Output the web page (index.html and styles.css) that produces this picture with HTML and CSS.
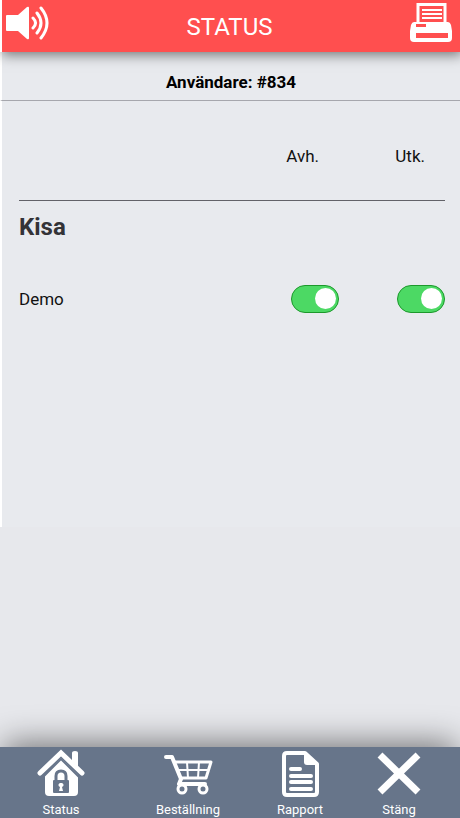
FILE: index.html
```html
<!DOCTYPE html>
<html lang="sv">
<head>
<meta charset="utf-8">
<meta name="viewport" content="width=device-width, initial-scale=1">
<title>Status</title>
<link rel="stylesheet" href="styles.css">
</head>
<body>
<div class="page">
  <header class="topbar">
    <button class="icon-button" type="button" aria-label="Ljud">
      <svg width="44" height="36" viewBox="0 0 44 36" fill="none" stroke="#fff" stroke-width="3" stroke-linecap="round">
        <path d="M1 10h11L21 2q2-1 2 1v30q0 2-2 1L12 26H1q-1 0-1-1V11q0-1 1-1z" fill="#fff" stroke="none"/>
        <path d="M27 13q5 5 0 10M31 8q8 10 0 20M35 3q12 15 0 30"/>
      </svg>
    </button>
    <h1 class="title">STATUS</h1>
    <button class="icon-button" type="button" aria-label="Skriv ut">
      <svg width="44" height="42" viewBox="0 0 44 42" fill="none" stroke="#fff">
        <path d="M9 21V2.500h27V21" stroke-width="3"/>
        <path d="M13 8h20M13 12h20M13 16h20" stroke-width="2"/>
        <path fill-rule="evenodd" d="M5 20h34q2 0 3 3l1 6v7q0 4-4 4H5q-4 0-4-4v-7l1-6q1-3 3-3zM7 22v3h10v-3zM7 31v5h32v-5z" fill="#fff" stroke="none"/>
      </svg>
    </button>
  </header>
  <main class="content">
    <p class="user">Användare: #834</p>
    <div class="panel">
      <table class="status-table">
        <thead>
          <tr><td></td><th class="option" scope="col">Avh.</th><th class="option" scope="col">Utk.</th></tr>
        </thead>
        <tbody>
          <tr><th class="group" scope="rowgroup" colspan="3">Kisa</th></tr>
          <tr>
            <th class="name" scope="row">Demo</th>
            <td class="option"><input class="switch" type="checkbox" role="switch" aria-label="Demo Avh." checked></td>
            <td class="option"><input class="switch" type="checkbox" role="switch" aria-label="Demo Utk." checked></td>
          </tr>
        </tbody>
      </table>
    </div>
  </main>
  <nav class="tabbar">
    <a class="tab" href="#status">
      <svg width="50" height="50" viewBox="0 0 50 50">
        <path d="M36 4q0-2 3-2t3 2v14l-6-6z" fill="#fff"/>
        <path d="M25 9L42 26v17q0 4-4 4H13q-4 0-4-4V26z" fill="#fff"/>
        <path d="M4 24L25 4l21 20" fill="none" stroke="#fff" stroke-width="5" stroke-linecap="round"/>
        <path d="M7 28L25 10l18 18" fill="none" stroke="#67758a" stroke-width="2"/>
        <path d="M20 32v-5q0-5 5-5t5 5v5" fill="none" stroke="#67758a" stroke-width="3"/>
        <rect x="17" y="31" width="16" height="13" rx="1" fill="#67758a"/>
        <path d="M25 34a2 2 0 0 1 1 4l1 4h-4l1-4a2 2 0 0 1 1-4z" fill="#fff"/>
      </svg>
      <span>Status</span>
    </a>
    <a class="tab" href="#bestallning">
      <svg width="50" height="50" viewBox="0 0 50 50" fill="none" stroke="#fff" stroke-linecap="round" stroke-linejoin="round">
        <path d="M3 8h6l9 22-2 5h26" stroke-width="4"/>
        <path d="M12 13h36l-5 16H18" stroke-width="3"/>
        <path d="M15 21h30M24 13l1 16M36 13l-1 16" stroke-width="2"/>
        <circle cx="19" cy="40" r="4" stroke-width="3" fill="#67758a"/>
        <circle cx="40" cy="40" r="4" stroke-width="3" fill="#67758a"/>
      </svg>
      <span>Beställning</span>
    </a>
    <a class="tab" href="#rapport">
      <svg width="50" height="50" viewBox="0 0 50 50" fill="none" stroke="#fff" stroke-linecap="round">
        <path d="M30 4H12q-3 0-3 3v36q0 3 3 3h27q3 0 3-3V15z" stroke-width="4" stroke-linejoin="round"/>
        <path d="M29 3v10q0 3 3 3h11z" fill="#fff" stroke="none"/>
        <path d="M16 20h9M16 27h20M16 33h20M16 40h20" stroke-width="4"/>
      </svg>
      <span>Rapport</span>
    </a>
    <a class="tab" href="#stang">
      <svg width="50" height="50" viewBox="0 0 50 50">
        <path d="M6 6l38 37M44 6L6 43" fill="none" stroke="#fff" stroke-width="7"/>
      </svg>
      <span>Stäng</span>
    </a>
  </nav>
</div>
</body>
</html>
```
FILE: styles.css
```css
* {
  box-sizing: border-box;
}

body {
  margin: 0;
  background: #e7e8ec;
  color: #111;
  font: 17px/20px Roboto, sans-serif;
}

.page {
  display: flex;
  flex-direction: column;
  min-height: 100vh;
}

.topbar {
  display: grid;
  grid-template-columns: 44px 1fr 44px;
  align-items: start;
  padding: 2px 7px 0 4px;
  height: 52px;
  border-left: 2px solid #fff;
  background: #ff4f4f;
  background-clip: padding-box;
  box-shadow: 2px 3px 12px rgba(0, 0, 0, 0.5);
  position: relative;
}

.icon-button {
  padding: 0;
  border: 0;
  background: none;
  line-height: 0;
}

.icon-button:first-child {
  padding-top: 3px;
}

.title {
  margin: 0;
  color: #fff;
  font-size: 24px;
  font-weight: 400;
  line-height: 50px;
  text-align: center;
}

.content {
  flex: 1;
}

.user {
  margin: 0;
  padding: 20px 0 8px;
  border-left: 2px solid #fff;
  border-bottom: 1px solid #a6a7ad;
  background: #e8eaee;
  font-weight: 700;
  color: #000;
  text-align: center;
}

.panel {
  min-height: 426px;
  padding: 0 15px 0 17px;
  border-left: 2px solid #fff;
  background: #e8eaee;
}

.status-table {
  width: 100%;
  border-collapse: collapse;
}

.status-table th,
.status-table td {
  padding: 0;
  font-weight: 400;
  text-align: left;
}

.status-table thead td,
.status-table thead th {
  padding: 45px 20px 34px 0;
  border-bottom: 1px solid #626268;
}

.status-table .option {
  width: 106px;
  text-align: right;
}

.status-table .group {
  height: 52px;
  color: #333337;
  font-size: 24px;
  font-weight: 700;
}

.status-table .name,
.status-table tbody .option {
  height: 92px;
  vertical-align: middle;
}

.switch {
  display: inline-flex;
  justify-content: flex-end;
  align-items: center;
  appearance: none;
  width: 48px;
  height: 28px;
  margin: 0;
  padding: 0 2px;
  border: 1px solid #1c982b;
  border-radius: 14px;
  background: #4cd964;
  vertical-align: middle;
}

.switch::before {
  content: "";
  width: 21px;
  height: 21px;
  border-radius: 50%;
  background: #fff;
}

.switch:not(:checked) {
  justify-content: flex-start;
  border-color: #999;
  background: #ccc;
}

.tabbar {
  display: grid;
  grid-template-columns: 122fr 132fr 92fr 106fr;
  height: 71px;
  padding: 2px 8px 0 0;
  background: #67758a;
  box-shadow: 0 -8px 32px -4px rgba(0, 0, 0, 0.5);
}

.tab {
  display: flex;
  flex-direction: column;
  align-items: center;
  color: #fff;
  font-size: 13px;
  line-height: 22px;
  text-decoration: none;
}
```
